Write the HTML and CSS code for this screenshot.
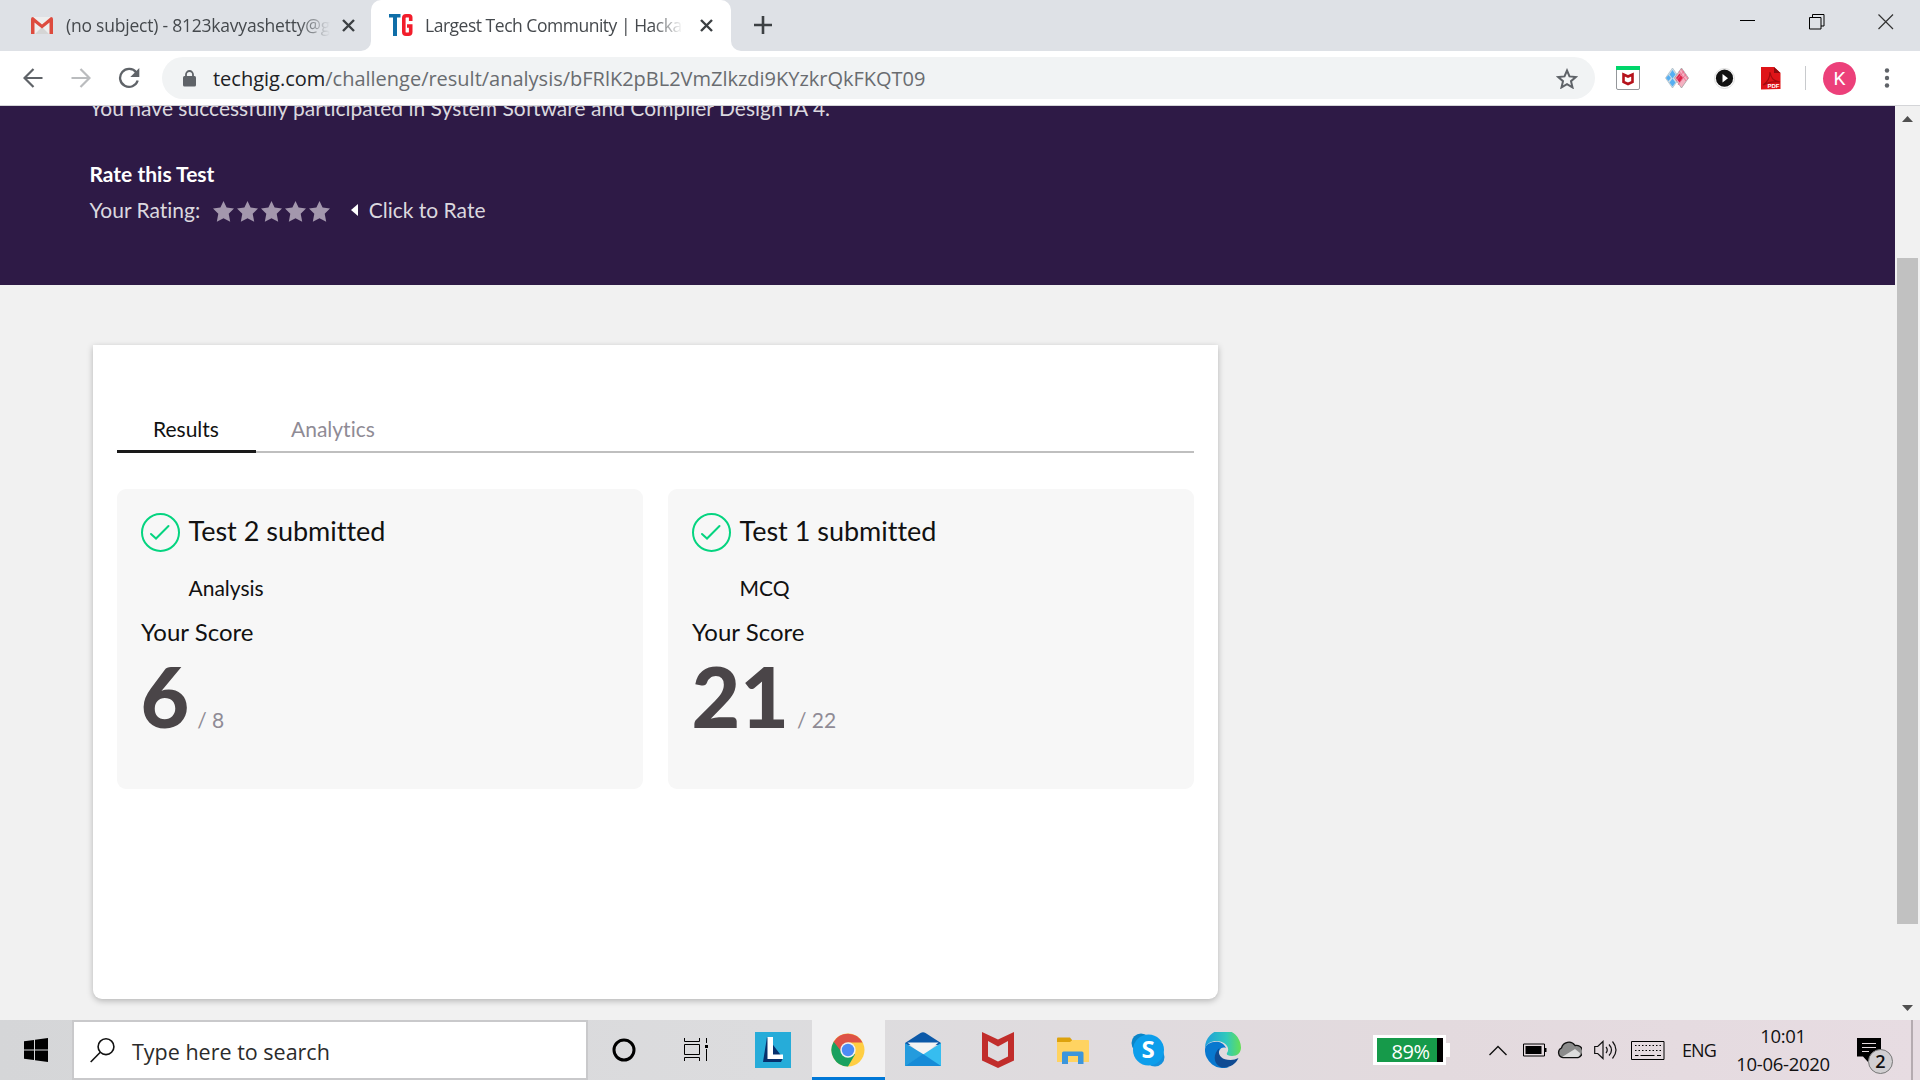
FILE: index.html
```html
<!DOCTYPE html>
<html lang="en">
<head>
<meta charset="utf-8">
<title>Largest Tech Community | Hackathons</title>
<link rel="stylesheet" href="styles.css">
</head>
<body>
<header class="tabstrip">
  <div class="tab">
    <svg class="gmail" width="22" height="17" viewBox="0 0 22 17"><path fill="#eee" d="M2 0h18v17H2z"/><path fill="#d5d5d5" d="M4 17l7-7 7 7z"/><path fill="#dd4b3e" d="M0 2Q0 0 2 0l9 7.500L20 0q2 0 2 2v15h-3.500V5.500L11 11.500 3.500 5.500V17H0z"/></svg>
    <span class="tab-title mail-title">(no subject) - 8123kavyashetty@g</span>
    <svg class="tab-close" width="13" height="13" viewBox="0 0 13 13"><path d="M1 1l11 11M12 1L1 12" stroke="#3c4043" stroke-width="2.4"/></svg>
  </div>
  <div class="tab tab-active">
    <svg class="tg" width="24" height="22" viewBox="0 0 24 22"><path fill="#0f6ea8" d="M0 0h11.500v3.500H8V22H4V3.500H0z"/><path fill="none" stroke="#f21d2b" stroke-width="3.600" d="M21.700 7V3.500Q21.700 1.800 20 1.800h-3Q14.800 1.800 14.800 4v14q0 2.200 2.200 2.200h2.500q2.200 0 2.200-2.200v-6H18"/></svg>
    <span class="tab-title page-title">Largest Tech Community | Hackat</span>
    <svg class="tab-close" width="13" height="13" viewBox="0 0 13 13"><path d="M1 1l11 11M12 1L1 12" stroke="#3c4043" stroke-width="2.4"/></svg>
  </div>
  <svg class="newtab" width="18" height="18" viewBox="0 0 18 18"><path d="M9 0v18M0 9h18" stroke="#3c4043" stroke-width="2.6"/></svg>
  <div class="winctl">
    <svg width="16" height="16" viewBox="0 0 16 16"><path d="M0 6.500h15" stroke="#000"/></svg>
    <svg width="16" height="16" viewBox="0 0 16 16"><path d="M.5 3.500h11.500v11.500H.5zM3.500 3.500V.5H15v11.500h-3" fill="none" stroke="#000"/></svg>
    <svg width="16" height="16" viewBox="0 0 16 16"><path d="M.5.5l14.500 14.500M15 .5L.5 15" stroke="#333" stroke-width="1.200"/></svg>
  </div>
</header>

<nav class="toolbar">
  <svg class="back" width="20" height="20" viewBox="0 0 20 20"><path d="M19.500 10H2M10.500 1L1.500 10l9 9" fill="none" stroke="#5f6368" stroke-width="2.200"/></svg>
  <svg class="forward" width="20" height="20" viewBox="0 0 20 20"><path d="M.5 10H18M9.500 1l9 9-9 9" fill="none" stroke="#babcbe" stroke-width="2.200"/></svg>
  <svg class="reload" width="22" height="22" viewBox="0 0 22 22"><path d="M18.300 5.500A9 9 0 1 0 19.700 13.500" fill="none" stroke="#5f6368" stroke-width="2.300"/><path d="M21.300 1v9h-9z" fill="#5f6368"/></svg>
  <div class="omnibox">
    <svg class="lock" width="13" height="17" viewBox="0 0 13 17"><rect y="6" width="13" height="10.500" rx="1.500" fill="#5f6368"/><path d="M3 7V4.500a3.500 3.500 0 0 1 7 0V7" fill="none" stroke="#5f6368" stroke-width="1.800"/></svg>
    <span class="url"><span class="host">techgig.com</span>/challenge/result/analysis/bFRlK2pBL2VmZlkzdi9KYzkrQkFKQT09</span>
    <svg class="bookmark" width="22" height="21" viewBox="0 0 22 21"><path d="M11 2.500l2.500 5.900 6.300.6-4.800 4.200 1.500 6.200L11 16.100l-5.500 3.300L7 13.200 2.200 9l6.300-.6z" fill="none" stroke="#5f6368" stroke-width="2"/></svg>
  </div>
  <div class="extensions">
    <svg width="24" height="24" viewBox="0 0 24 24"><rect x=".5" y=".5" width="23" height="23" rx="1.500" fill="#fff" stroke="#94979b"/><path fill="#00d66b" d="M0 0h24v4H0z"/><path d="M7.500 8.500l4.500 2 4.500-2v7.500L12 18l-4.500-2z" fill="none" stroke="#b5121b" stroke-width="2.600"/></svg>
    <svg width="24" height="20" viewBox="0 0 24 20"><path d="M7.500 0l7 10-7 10L.5 10z" fill="#c9dce8" stroke="#a8b8c3" stroke-width=".7"/><path d="M7.500 2l3 4.500-3 4-3-4zM7.500 10.500l3 4-3 4-3-4zM3.500 7l2.500 3-2.500 3L1 10z" fill="#56aff2"/><path d="M16.500 0l7 10-7 10-7-10z" fill="#f4b1c1" stroke="#999" stroke-width=".7"/><path d="M14.500 5.500l3.500 4.500-3.500 4.500L11 10z" fill="#dd254a"/><path d="M14 3l7 10M16 1l7 10M13 17l8-11M11 13l8-10" stroke="#eb698a" stroke-width=".8"/></svg>
    <svg width="21" height="21" viewBox="0 0 21 21"><circle cx="10.500" cy="10.500" r="10" fill="#fff" stroke="#ddd"/><circle cx="10.500" cy="10.200" r="8.600" fill="#111"/><path d="M8.500 6v8.500l5.500-4.200z" fill="#fff"/></svg>
    <svg width="22" height="23" viewBox="0 0 22 23"><path d="M1 0h13l6.500 6v16L1 22.500z" fill="#df1418"/><path d="M14 0l6.500 6H14z" fill="#8e0b0e"/><path d="M3 18c5-3 7-8 7-13 1 6 3 9 10 10-6-1-11 0-17 3" fill="none" stroke="#a30c10" stroke-width="1.200"/><text x="7.500" y="21" class="pdf">PDF</text></svg>
  </div>
  <span class="divider"></span>
  <span class="avatar">K</span>
  <svg class="menu" width="6" height="20" viewBox="0 0 6 20"><g fill="#5f6368"><circle cx="3" cy="2.500" r="2.200"/><circle cx="3" cy="10" r="2.200"/><circle cx="3" cy="17.500" r="2.200"/></g></svg>
</nav>

<div class="viewport">
  <main class="page">
    <section class="hero">
      <p class="message">You have successfully participated in System Software and Compiler Design IA 4.</p>
      <h2 class="rate-title">Rate this Test</h2>
      <div class="rating">
        <span class="rating-label">Your Rating:</span>
        <svg class="stars" width="118" height="21" viewBox="0 0 118 20" preserveAspectRatio="none"><defs><path id="star" d="M10.500 0l3.100 6.200 7.400.9-5.300 5 1.500 7.600-6.700-3.300-6.700 3.300 1.500-7.600L0 7.100l7.400-.9z"/></defs><g fill="#a397ad"><use href="#star"/><use href="#star" x="24"/><use href="#star" x="48"/><use href="#star" x="72"/><use href="#star" x="96"/></g></svg>
        <svg class="caret" width="7" height="12" viewBox="0 0 7 12"><path d="M7 0v12L0 6z" fill="#fff"/></svg>
        <span class="click">Click to Rate</span>
      </div>
    </section>
    <section class="panel">
      <div class="panel-tabs">
        <span class="panel-tab selected">Results</span>
        <span class="panel-tab">Analytics</span>
      </div>
      <div class="scores">
        <article class="score">
          <div class="score-head">
            <svg width="39" height="39" viewBox="0 0 39 39"><circle cx="19.500" cy="19.500" r="18.500" fill="none" stroke="#05d480" stroke-width="2"/><path d="M10 21l5 4.500L27.500 13" fill="none" stroke="#05d480" stroke-width="2" stroke-linecap="round"/></svg>
            <h3>Test 2 submitted</h3>
          </div>
          <p class="kind">Analysis</p>
          <p class="label">Your Score</p>
          <p class="points"><strong>6</strong><span>/ 8</span></p>
        </article>
        <article class="score">
          <div class="score-head">
            <svg width="39" height="39" viewBox="0 0 39 39"><circle cx="19.500" cy="19.500" r="18.500" fill="none" stroke="#05d480" stroke-width="2"/><path d="M10 21l5 4.500L27.500 13" fill="none" stroke="#05d480" stroke-width="2" stroke-linecap="round"/></svg>
            <h3>Test 1 submitted</h3>
          </div>
          <p class="kind">MCQ</p>
          <p class="label">Your Score</p>
          <p class="points"><strong>21</strong><span>/ 22</span></p>
        </article>
      </div>
    </section>
  </main>
  <aside class="scrollbar">
    <svg width="11" height="6" viewBox="0 0 11 6"><path d="M5.500 0L11 6H0z" fill="#505050"/></svg>
    <span class="thumb"></span>
    <svg class="down" width="11" height="6" viewBox="0 0 11 6"><path d="M0 0h11L5.500 6z" fill="#505050"/></svg>
  </aside>
</div>

<footer class="taskbar">
  <div class="start"><svg width="24" height="24" viewBox="0 0 24 24"><path d="M0 3.300L10 2v9.500H0zM11 1.800L24 0v11.500H11zM0 12.500h10V22L0 20.700zM11 12.500h13V24l-13-1.800z"/></svg></div>
  <div class="search">
    <svg width="25" height="25" viewBox="0 0 25 25"><circle cx="16" cy="8.700" r="7.900" fill="none" stroke="#111" stroke-width="1.600"/><path d="M10.300 14.300L.7 24" stroke="#111" stroke-width="1.600"/></svg>
    <span>Type here to search</span>
  </div>
  <div class="slot"><svg width="24" height="24" viewBox="0 0 24 24"><circle cx="12" cy="12" r="10" fill="none" stroke="#000" stroke-width="3"/></svg></div>
  <div class="slot slot-view"><svg width="25" height="24" viewBox="0 0 25 24"><path d="M.5 0v3.500h15V0M.5 6.500h15v10H.5zM.5 23v-3.500h15V23M22.500 0v5M22.500 11v12" fill="none" stroke="#000"/><path d="M21 7h3v3h-3z"/></svg></div>
  <div class="slot"><svg width="36" height="36" viewBox="0 0 36 36"><path fill="#26acd9" d="M0 0h36v36H0z"/><path d="M12 5L8 30h18l2-4z" fill="#06306d"/><path d="M12.500 5h5.500v17.500h10V27H12.500z" fill="#fff"/></svg></div>
  <div class="slot slot-active"><svg width="34" height="34" viewBox="0 0 34 34"><circle cx="17" cy="17" r="16.500" fill="#ffce43"/><path d="M17 17L2.700 8.700A16.500 16.500 0 0 0 17 33.500l7-12z" fill="#19a15f"/><path d="M2.700 8.700A16.500 16.500 0 0 1 31.500 9.500H17l-7.500 8z" fill="#de5246"/><circle cx="17" cy="17" r="7.700" fill="#f1f1f1"/><circle cx="17" cy="17" r="6.200" fill="#4c8bf5"/></svg></div>
  <div class="slot slot-mail"><svg width="36" height="34" viewBox="0 0 36 34"><path d="M0 11L15.500 1Q18-.5 20.500 1L36 11v2H0z" fill="#0c59a8"/><path d="M2.500 10.500h31L18 24z" fill="#f4f4f4"/><path d="M0 11l18 11v12H0z" fill="#249bdd"/><path d="M36 11L0 34h36z" fill="#36bdf0"/><path d="M18 22l18 12H0z" fill="#168bd7"/></svg></div>
  <div class="slot slot-mcafee"><svg width="32" height="36" viewBox="0 0 32 36"><path fill="#c12d2b" fill-rule="evenodd" d="M0 0l16 7.500L32 0v28.500L16 36 0 28.500zM6 9v15.500L16 29.500l10-5V9l-10 5.500z"/></svg></div>
  <div class="slot slot-files"><svg width="32" height="27" viewBox="0 0 32 27"><path d="M0 5V1.500Q0 .5 1 .5h12l2 2.500v5H0z" fill="#dda20c"/><path d="M0 5h13l2.500-2H31q1 0 1 1v21H0z" fill="#ffd361"/><path d="M5 27V16q0-1.500 1.500-1.500H25q1.500 0 1.500 1.500v11h-5.500v-8H11v8z" fill="#3b96dc"/></svg></div>
  <div class="slot slot-skype"><svg width="34" height="34" viewBox="0 0 34 34"><circle cx="10" cy="10" r="9.500" fill="#0a85c8"/><circle cx="24" cy="24" r="9.500" fill="#1590dc"/><circle cx="17.500" cy="17" r="15.500" fill="#0d9eeb"/><text x="17" y="25" class="skype">S</text></svg></div>
  <div class="slot slot-edge"><svg width="36" height="36" viewBox="0 0 36 36"><defs><linearGradient id="sea"><stop offset="0" stop-color="#209fdc"/><stop offset=".6" stop-color="#31c9bb"/><stop offset="1" stop-color="#64df55"/></linearGradient></defs><path d="M0 16A18 18 0 0 1 36 15.500c0 5-3.500 8.500-9 8.500-4 0-6-1.300-5-3 4-6-3-12-10-12C6 9 2 11.500 0 16z" fill="url(#sea)"/><path d="M0 17C1 9 17 6 21 16c-7-3-10 8-5 14 2 3 5 5 8 5A18 18 0 0 1 0 17z" fill="#0878cf"/><path d="M14.500 16c-2 5 0 12 11 12 3 0 5.500-1 8-2-3 7-11 11-18 9-7-3-8-13-1-19z" fill="#104b92"/></svg></div>
  <div class="tray">
    <div class="charge"><span class="level">89%</span></div>
    <svg class="up" width="18" height="11" viewBox="0 0 18 11"><path d="M.5 10L9 1.500l8.500 8.500" fill="none" stroke="#111" stroke-width="1.400"/></svg>
    <svg class="cell" width="24" height="14" viewBox="0 0 24 14"><path d="M.5 1h21v12H.5z" fill="none" stroke="#000"/><path d="M2.500 3h16v8h-16zM22 5h1.500v4H22z"/></svg>
    <svg class="cloud" width="25" height="18" viewBox="0 0 25 18"><path d="M6 16.500A5 5 0 0 1 4.500 7 7.500 7.500 0 0 1 18 4.500a6 6 0 0 1 3 12z" fill="#8b8b8b" stroke="#111" stroke-width="1.300"/><path d="M5 16l13-8 5 4q0 4-3 4z" fill="#ddd"/></svg>
    <svg class="sound" width="24" height="20" viewBox="0 0 24 20"><path d="M.7 6.500h3L9 1.500v17l-5.300-5h-3z" fill="none" stroke="#111" stroke-width="1.200"/><path d="M12 7q2.500 3 0 6M15 4.500q5 5.500 0 11M18.500 1.500q7 8.500 0 17" fill="none" stroke="#111" stroke-width="1.200"/></svg>
    <svg class="keys" width="34" height="19" viewBox="0 0 34 19"><path d="M.5.5h32.500v18H.5z" fill="none" stroke="#000"/><path d="M4 4.500h26M4 9.500h26" stroke="#000" stroke-dasharray="1.500 2"/><path d="M4 14.500h3.500M9.500 14.500h14M26 14.500h4" stroke="#000"/></svg>
    <span class="lang">ENG</span>
    <div class="clock"><span class="time">10:01</span><span class="date">10-06-2020</span></div>
    <div class="notice">
      <svg width="24" height="24" viewBox="0 0 24 24"><path d="M0 0h24v18.500H15L11 24 6 18.500H0z"/><path d="M5 5.500h14M5 9.500h14M5 13.500h7" stroke="#e4dade"/></svg>
      <span class="badge">2</span>
    </div>
    <span class="desktop"></span>
  </div>
</footer>
</body>
</html>
```
FILE: styles.css
```css
* { box-sizing: border-box; }
body {
  margin: 0;
  width: 1920px;
  height: 1080px;
  overflow: hidden;
  display: flex;
  flex-direction: column;
  font-family: "Open Sans", sans-serif;
  color: #111;
}
svg { display: block; flex: none; }
h2, h3, p { margin: 0; font-weight: 400; }

/* Tab strip */
.tabstrip { height: 51px; flex: none; display: flex; background: linear-gradient(#fff, #fff) 355px 36px / 390px 15px no-repeat #dee1e6; }
.tab { display: flex; align-items: center; width: 371px; padding: 0 16px 1px 31px; background: #dee1e6; border-bottom-right-radius: 10px; }
.tab-active { width: 360px; padding: 0 18px 1px; background: #fff; border-radius: 10px 10px 0 0; }
.tab-title { font-size: 17.500px; line-height: 26px; padding-bottom: 1px; white-space: nowrap; overflow: hidden; color: #45494d; -webkit-mask-image: linear-gradient(90deg, #000 88%, transparent); mask-image: linear-gradient(90deg, #000 88%, transparent); }
.mail-title { width: 266px; margin: 0 12px 0 13px; letter-spacing: -0.22px; }
.page-title { width: 264px; margin: 0 17px 0 12px; letter-spacing: -0.48px; }
.tab-active + .newtab { box-sizing: content-box; padding: 16px 0 17px 23px; border-bottom-left-radius: 10px; background: #dee1e6; }
.winctl { flex: 1; display: flex; justify-content: flex-end; gap: 53px; padding: 14px 26px 0 0; background: #dee1e6; }

/* Toolbar */
.toolbar { height: 55px; flex: none; display: flex; align-items: center; background: #fff; border-bottom: 1px solid #d4d5d8; }
.back { margin-left: 23px; }
.forward { margin-left: 28px; }
.reload { margin-left: 27px; }
.omnibox { width: 1433px; height: 42px; margin-left: 22px; padding: 0 17px 0 21px; border-radius: 21px; background: #f1f3f4; display: flex; align-items: center; }
.url { margin-left: 17px; flex: 1; font-size: 20px; letter-spacing: -0.01px; color: #696c70; white-space: nowrap; }
.host { color: #202124; }
.extensions { display: flex; align-items: center; gap: 25px; margin-left: 21px; }
.pdf { font: bold 6px "Liberation Sans", sans-serif; fill: #fff; }
.divider { width: 1px; height: 24px; margin-left: 23px; background: #c8cacd; }
.avatar { width: 33px; height: 33px; margin-left: 17px; border-radius: 50%; background: #ec407a; color: #fff; font: 19px/33px Roboto, sans-serif; text-align: center; }
.menu { margin-left: 28px; }

/* Page */
.viewport { flex: 1; min-height: 0; display: flex; overflow: hidden; background: #f1f1f1; }
.page { width: 1895px; font-family: Lato, sans-serif; font-variant-ligatures: none; }
.hero { height: 179px; overflow: hidden; padding-left: 89.500px; background: #2e1a46; color: #dbd8df; font-size: 21px; line-height: 30px; }
.message { margin-top: -13px; letter-spacing: 0.015px; }
.rate-title { margin-top: 36px; font-size: 21px; font-weight: 700; line-height: 30px; color: #fff; }
.rating { display: flex; align-items: center; margin-top: 6px; }
.stars { margin: 2px 0 0 13px; }
.caret { margin: 0 11px 0 19.500px; }
.panel { width: 1125px; height: 654px; margin: 60px 0 0 93px; padding: 61px 24px 0; background: #fff; border-radius: 0 0 9px 9px; box-shadow: 0 2px 6px rgba(0, 0, 0, 0.25); }
.panel-tabs { height: 47px; display: flex; border-bottom: 2px solid #bfbfbf; }
.panel-tab { height: 47px; padding: 0 35px; font-size: 21px; line-height: 46px; color: #8f8b95; }
.selected { width: 139px; padding: 0 36px; color: #111; border-bottom: 3px solid #1a1a1a; }
.scores { display: flex; gap: 25px; margin-top: 36px; }
.score { width: 526px; height: 300px; padding: 24px; border-radius: 9px; background: #f7f7f7; }
.score-head { display: flex; align-items: center; gap: 8.500px; height: 39px; }
.score-head h3 { font-size: 27px; line-height: 36px; margin-top: -3px; }
.kind { margin: 21px 0 0 47.500px; font-size: 21px; line-height: 30px; }
.label { margin-top: 14px; font-size: 24px; line-height: 30px; }
.points { display: flex; align-items: baseline; gap: 8px; margin: 4px 0 0 -0.500px; line-height: 90px; }
.points strong { font-size: 84px; font-weight: 900; color: #4a4548; }
.points span { font-size: 21px; color: #8f8b95; }
.scrollbar { width: 25px; display: flex; flex-direction: column; align-items: center; padding: 10px 0 9px; background: #f1f1f1; }
.thumb { width: 21px; height: 666px; margin-top: 136px; background: #c1c1c1; }
.down { margin-top: auto; }

/* Taskbar */
.taskbar { height: 60px; flex: none; display: flex; background: linear-gradient(90deg, #d5d6d8 0, #dcdcde 40%, #e3dade 75%, #e7dce2); }
.start { width: 72px; display: flex; align-items: center; padding-left: 24px; }
.search { width: 516px; display: flex; align-items: center; border: 2px solid #c9c9cb; background: #fff; padding-left: 16px; }
.search span { margin: 3px 0 0 17px; font-size: 21.500px; color: #2b2b2b; }
.slot { width: 72px; display: flex; align-items: center; justify-content: center; }
.slot-view { width: 76px; }
.slot + .slot-view + .slot { width: 76px; }
.slot-view svg { margin-left: -4px; }
.slot + .slot-view + .slot svg { margin-left: -2px; }
.slot-active { width: 73px; background: #f1f1f2; border-bottom: 3px solid #0078d7; }
.slot-active svg { margin: 2px 1px 0 0; }
.slot-mail { width: 76px; }
.slot-mail svg { margin-top: -2px; }
.slot-mcafee { width: 74px; }
.slot-files { width: 76px; }
.slot-skype { width: 74px; }
.slot-edge { width: 76px; }
.skype { font: 700 24px "Open Sans", sans-serif; fill: #fff; text-anchor: middle; }
.tray { flex: 1; display: flex; align-items: center; justify-content: flex-start; padding-left: 112px; }
.charge { position: relative; width: 73px; height: 30px; padding: 3px 4px; background: #fff; }
.charge::after { content: ""; position: absolute; left: 73px; top: 8px; width: 4px; height: 14px; background: #fff; }
.level { display: block; width: 66px; height: 24px; border-right: 6px solid #000; background: #169a4a; color: #fff; font-size: 20px; line-height: 27px; text-align: center; padding-left: 7px; letter-spacing: -0.4px; }
.up { margin-left: 43px; }
.cell { margin-left: 16px; }
.cloud { margin-left: 10px; }
.sound { margin-left: 12px; }
.keys { margin-left: 13px; }
.lang { width: 36px; margin-left: 17px; font-size: 18px; letter-spacing: -0.9px; }
.clock { width: 96px; margin-left: 17px; display: flex; flex-direction: column; align-items: center; font-size: 18.500px; line-height: 28px; letter-spacing: -0.3px; white-space: nowrap; }
.notice { position: relative; width: 24px; margin-left: 26px; }
.badge { position: absolute; left: 11px; top: 11px; width: 25px; height: 25px; border: 1px solid #777; border-radius: 50%; background: #d1cfd1; font-size: 18px; font-weight: 600; line-height: 23px; text-align: center; }
.desktop { width: 2px; height: 60px; margin-left: 30px; background: #b5abb0; }
```
